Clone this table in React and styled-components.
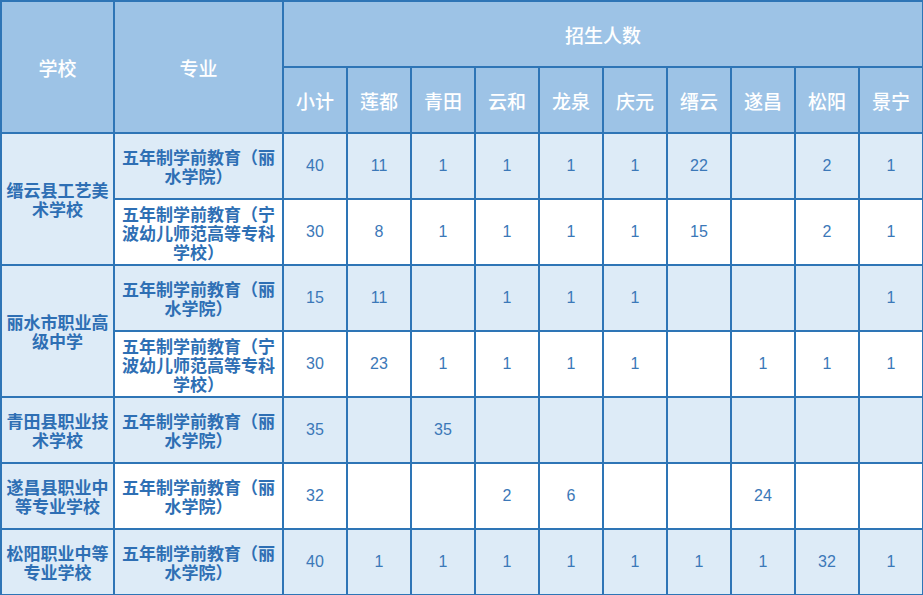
import React from 'react';
import styled, { createGlobalStyle } from 'styled-components';

const GlobalStyle = createGlobalStyle`
  html, body {
    margin: 0;
    padding: 0;
    background: #fff;
  }
`;

const Table = styled.table`
  width: 923px;
  table-layout: fixed;
  border-collapse: collapse;
  font-family: 'Noto Sans CJK SC', sans-serif;
`;

const HeadCell = styled.th`
  height: 64px;
  padding: 0;
  background: #9dc3e6;
  border: 2px solid #2e75b6;
  color: #fff;
  font-size: 19px;
  font-weight: 500;
  text-align: center;
  vertical-align: middle;
`;

const Row = styled.tr`
  background: ${(p) => (p.light ? '#ddebf7' : '#fff')};
`;

const TextCell = styled.td`
  height: 64px;
  padding: 0 3px;
  border: 2px solid #2e75b6;
  background: ${(p) => (p.light ? '#ddebf7' : 'inherit')};
  color: #2e6fb4;
  font-size: 17px;
  font-weight: 700;
  line-height: 19px;
  text-align: center;
  vertical-align: middle;
  word-break: break-all;
  line-break: anywhere;
`;

const NumCell = styled.td`
  padding: 0;
  border: 2px solid #2e75b6;
  color: #3b78b8;
  font-family: 'Liberation Sans', Arial, sans-serif;
  font-size: 16px;
  text-align: center;
  vertical-align: middle;
`;

const LISHUI = '五年制学前教育（丽水学院）';
const NINGBO = '五年制学前教育（宁波幼儿师范高等专科学校）';

const counties = ['小计', '莲都', '青田', '云和', '龙泉', '庆元', '缙云', '遂昌', '松阳', '景宁'];

const rows = [
  { school: '缙云县工艺美术学校', span: 2, major: LISHUI, light: true, nums: ['40', '11', '1', '1', '1', '1', '22', '', '2', '1'] },
  { major: NINGBO, light: false, nums: ['30', '8', '1', '1', '1', '1', '15', '', '2', '1'] },
  { school: '丽水市职业高级中学', span: 2, major: LISHUI, light: true, nums: ['15', '11', '', '1', '1', '1', '', '', '', '1'] },
  { major: NINGBO, light: false, nums: ['30', '23', '1', '1', '1', '1', '', '1', '1', '1'] },
  { school: '青田县职业技术学校', span: 1, major: LISHUI, light: true, nums: ['35', '', '35', '', '', '', '', '', '', ''] },
  { school: '遂昌县职业中等专业学校', span: 1, major: LISHUI, light: false, nums: ['32', '', '', '2', '6', '', '', '24', '', ''] },
  { school: '松阳职业中等专业学校', span: 1, major: LISHUI, light: true, nums: ['40', '1', '1', '1', '1', '1', '1', '1', '32', '1'] },
];

export default function App() {
  return (
    <>
      <GlobalStyle />
      <Table>
        <colgroup>
          <col style={{ width: 113 }} />
          <col style={{ width: 169 }} />
          {counties.map((c) => (
            <col key={c} style={{ width: 64 }} />
          ))}
        </colgroup>
        <thead>
          <tr>
            <HeadCell rowSpan={2}>学校</HeadCell>
            <HeadCell rowSpan={2}>专业</HeadCell>
            <HeadCell colSpan={10}>招生人数</HeadCell>
          </tr>
          <tr>
            {counties.map((c) => (
              <HeadCell key={c}>{c}</HeadCell>
            ))}
          </tr>
        </thead>
        <tbody>
          {rows.map((r, i) => (
            <Row key={i} light={r.light}>
              {r.school && (
                <TextCell rowSpan={r.span} light>
                  {r.school}
                </TextCell>
              )}
              <TextCell>{r.major}</TextCell>
              {r.nums.map((n, j) => (
                <NumCell key={j}>{n}</NumCell>
              ))}
            </Row>
          ))}
        </tbody>
      </Table>
    </>
  );
}
